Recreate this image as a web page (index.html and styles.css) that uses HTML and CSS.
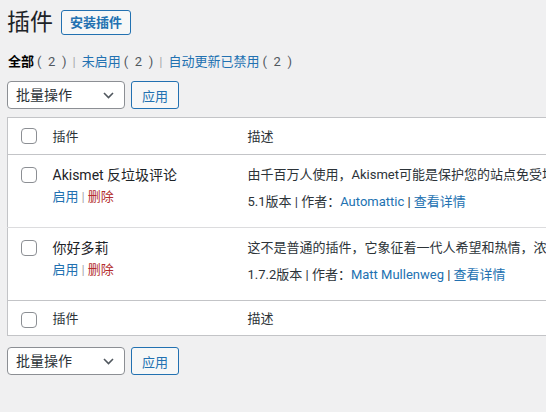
FILE: index.html
```html
<!DOCTYPE html>
<html lang="zh-CN">
<head>
    <meta charset="UTF-8">
    <meta name="viewport" content="width=device-width, initial-scale=1.0">
    <title>插件</title>
    <link rel="stylesheet" href="styles.css">
</head>
<body>
    <div class="wrap">
        <div class="page-head">
            <h1 class="page-title">插件</h1>
            <a href="#" class="add-new">安装插件</a>
        </div>

        <ul class="subsubsub">
            <li><a href="#" class="current">全部<span class="count">(&ensp;2&ensp;)</span></a><span class="sep">|</span></li>
            <li><a href="#">未启用<span class="count">(&ensp;2&ensp;)</span></a><span class="sep">|</span></li>
            <li><a href="#">自动更新已禁用<span class="count">(&ensp;2&ensp;)</span></a></li>
        </ul>

        <div class="bulk">
            <div class="select">
                <span>批量操作</span>
                <svg width="11" height="7" viewBox="0 0 11 7"><path d="M1 1l4.5 4.5L10 1" fill="none" stroke="#50575e" stroke-width="1.6"/></svg>
            </div>
            <button class="apply">应用</button>
        </div>

        <div class="table-box">
            <table class="plugins">
                <colgroup>
                    <col class="c-check">
                    <col class="c-name">
                    <col>
                </colgroup>
                <thead>
                    <tr>
                        <td class="check head-check"><input type="checkbox"></td>
                        <th>插件</th>
                        <th>描述</th>
                    </tr>
                </thead>
                <tbody>
                    <tr>
                        <td class="check"><input type="checkbox"></td>
                        <td class="name">
                            <strong>Akismet 反垃圾评论</strong>
                            <div class="row-actions"><a href="#">启用</a><span class="bar">|</span><a href="#" class="delete">删除</a></div>
                        </td>
                        <td class="desc">
                            <p class="desc-text">由千百万人使用，Akismet可能是保护您的站点免受垃圾评论困扰的最佳方式。</p>
                            <p class="meta">5.1版本 | 作者：<a href="#">Automattic</a> | <a href="#">查看详情</a></p>
                        </td>
                    </tr>
                    <tr>
                        <td class="check"><input type="checkbox"></td>
                        <td class="name">
                            <strong>你好多莉</strong>
                            <div class="row-actions"><a href="#">启用</a><span class="bar">|</span><a href="#" class="delete">删除</a></div>
                        </td>
                        <td class="desc">
                            <p class="desc-text">这不是普通的插件，它象征着一代人希望和热情，浓缩成Louis Armstrong的四个字：你好，多莉。</p>
                            <p class="meta">1.7.2版本 | 作者：<a href="#">Matt Mullenweg</a> | <a href="#">查看详情</a></p>
                        </td>
                    </tr>
                </tbody>
                <tfoot>
                    <tr>
                        <td class="check foot-check"><input type="checkbox"></td>
                        <th>插件</th>
                        <th>描述</th>
                    </tr>
                </tfoot>
            </table>
        </div>

        <div class="bulk bulk-bottom">
            <div class="select">
                <span>批量操作</span>
                <svg width="11" height="7" viewBox="0 0 11 7"><path d="M1 1l4.5 4.5L10 1" fill="none" stroke="#50575e" stroke-width="1.6"/></svg>
            </div>
            <button class="apply">应用</button>
        </div>
    </div>
</body>
</html>
```

FILE: styles.css
```css
body {
    margin: 0;
    background: #f0f0f1;
    color: #3c434a;
    font-family: Roboto, "Noto Sans CJK SC", sans-serif;
    font-size: 13px;
    line-height: 20px;
    overflow: hidden;
}

a {
    color: #2271b1;
    text-decoration: none;
}

.wrap {
    padding-left: 7px;
}

/* Heading */
.page-head {
    display: flex;
    align-items: center;
    gap: 8px;
    margin-top: 8px;
    height: 29px;
}

.page-title {
    margin: 0;
    font-size: 23px;
    font-weight: 400;
    line-height: 29px;
    color: #1d2327;
}

.add-new {
    height: 25px;
    box-sizing: border-box;
    padding: 0 8px;
    line-height: 23px;
    border: 1px solid #2271b1;
    border-radius: 3px;
    background: #f6f7f7;
    font-weight: 600;
    font-size: 13px;
}

/* Filter links */
.subsubsub {
    list-style: none;
    margin: 15px 0 0 1px;
    padding: 0;
    display: flex;
    line-height: 20px;
}

.subsubsub .current {
    color: #000;
    font-weight: 600;
}

.count {
    color: #50575e;
    font-weight: 400;
    margin-left: 3px;
}

.sep {
    color: #a7aaad;
    padding: 0 6px;
}

/* Bulk actions */
.bulk {
    display: flex;
    gap: 6px;
    margin-top: 9px;
}

.bulk-bottom {
    margin-top: 11px;
}

.select {
    width: 118px;
    height: 28px;
    box-sizing: border-box;
    display: flex;
    align-items: center;
    justify-content: space-between;
    padding: 0 10px 0 8px;
    background: #fff;
    border: 1px solid #8c8f94;
    border-radius: 4px;
    color: #2c3338;
    font-size: 14px;
}

.apply {
    width: 48px;
    height: 28px;
    padding: 0;
    border: 1px solid #2271b1;
    border-radius: 3px;
    background: #f6f7f7;
    color: #2271b1;
    font-family: inherit;
    font-size: 13px;
}

/* Table */
.table-box {
    margin-top: 8px;
}

.plugins {
    width: 720px;
    table-layout: fixed;
    border-collapse: collapse;
    background: #fff;
    border: 1px solid #c3c4c7;
}

.c-check { width: 36px; }
.c-name { width: 195px; }

.plugins th,
.plugins td {
    text-align: left;
    vertical-align: top;
    padding: 10px 9px 15px;
    white-space: nowrap;
    overflow: hidden;
}

.plugins th {
    font-weight: 400;
    color: #2c3338;
    padding: 9px 9px 7px;
}

.plugins tfoot th {
    padding: 8px 9px 6px;
}

.plugins thead tr {
    border-bottom: 1px solid #c3c4c7;
}

.plugins tfoot tr {
    border-top: 1px solid #c3c4c7;
}

.plugins tbody tr + tr {
    border-top: 1px solid #dcdcde;
}

.plugins td.check {
    padding: 12px 0 0 13px;
}

.plugins td.head-check {
    padding: 10px 0 0 13px;
}

.plugins td.foot-check {
    padding: 11px 0 0 13px;
}

input[type="checkbox"] {
    appearance: none;
    display: block;
    margin: 0;
    width: 16px;
    height: 16px;
    border: 1px solid #8c8f94;
    border-radius: 4px;
    background: #fff;
}

.name strong {
    display: block;
    font-weight: 400;
    font-size: 14px;
    color: #1d2327;
}

.row-actions {
    padding-top: 2px;
}

.bar {
    color: #a7aaad;
    padding: 0 3px;
}

.delete {
    color: #b32d2e;
}

.desc p {
    margin: 0;
}

.desc-text {
    margin-bottom: 7px !important;
    color: #2c3338;
}

.meta {
    color: #2c3338;
}
```
